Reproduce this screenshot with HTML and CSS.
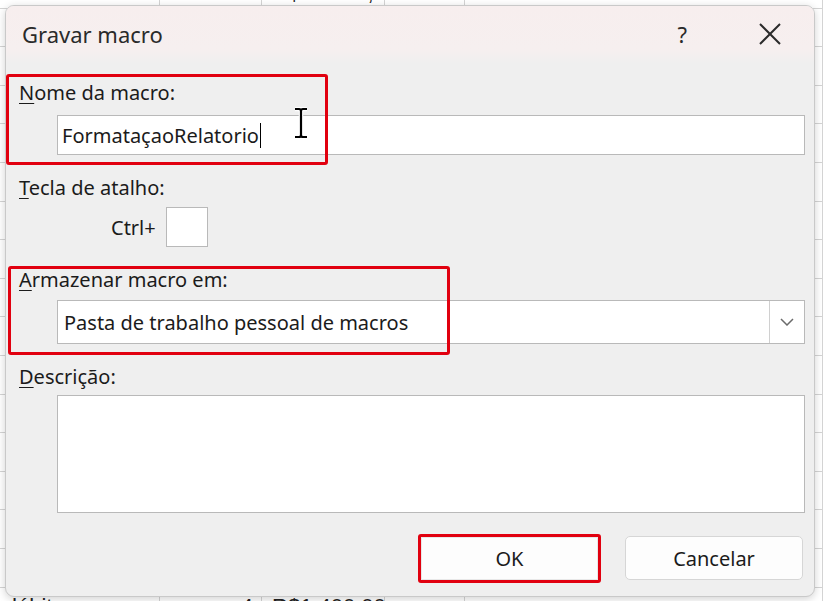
FILE: index.html
```html
<!DOCTYPE html>
<html lang="pt">
<head>
<meta charset="utf-8">
<title>Gravar macro</title>
<link rel="stylesheet" href="styles.css">
</head>
<body>
<div class="sheet">
  <div class="row first"><span class="c1">Cartão de crédito</span><span class="c2">1</span><span class="c3"><span>R$</span><span>16.239,00</span></span><span class="c4"></span><span class="c5"></span></div>
  <div class="row"><span class="c1"></span><span class="c2"></span><span class="c3"></span><span class="c4"></span><span class="c5"></span></div>
  <div class="row"><span class="c1"></span><span class="c2"></span><span class="c3"></span><span class="c4"></span><span class="c5"></span></div>
  <div class="row"><span class="c1"></span><span class="c2"></span><span class="c3"></span><span class="c4"></span><span class="c5"></span></div>
  <div class="row"><span class="c1"></span><span class="c2"></span><span class="c3"></span><span class="c4"></span><span class="c5"></span></div>
  <div class="row"><span class="c1"></span><span class="c2"></span><span class="c3"></span><span class="c4"></span><span class="c5"></span></div>
  <div class="row"><span class="c1"></span><span class="c2"></span><span class="c3"></span><span class="c4"></span><span class="c5"></span></div>
  <div class="row"><span class="c1"></span><span class="c2"></span><span class="c3"></span><span class="c4"></span><span class="c5"></span></div>
  <div class="row"><span class="c1"></span><span class="c2"></span><span class="c3"></span><span class="c4"></span><span class="c5"></span></div>
  <div class="row"><span class="c1"></span><span class="c2"></span><span class="c3"></span><span class="c4"></span><span class="c5"></span></div>
  <div class="row"><span class="c1"></span><span class="c2"></span><span class="c3"></span><span class="c4"></span><span class="c5"></span></div>
  <div class="row"><span class="c1"></span><span class="c2"></span><span class="c3"></span><span class="c4"></span><span class="c5"></span></div>
  <div class="row"><span class="c1"></span><span class="c2"></span><span class="c3"></span><span class="c4"></span><span class="c5"></span></div>
  <div class="row"><span class="c1"></span><span class="c2"></span><span class="c3"></span><span class="c4"></span><span class="c5"></span></div>
  <div class="row"><span class="c1"></span><span class="c2"></span><span class="c3"></span><span class="c4"></span><span class="c5"></span></div>
  <div class="row"><span class="c1"></span><span class="c2"></span><span class="c3"></span><span class="c4"></span><span class="c5"></span></div>
  <div class="row last"><span class="c1"><span class="shift">Cartão de débito</span></span><span class="c2">4</span><span class="c3"><span>R$</span><span>1.400,00</span></span><span class="c4"></span><span class="c5"></span></div>
</div>

<div class="dialog">
  <div class="titlebar">
    <span class="title">Gravar macro</span>
    <span class="help">?</span>
    <svg class="close" width="22" height="22" viewBox="0 0 22 22"><path d="M1 1 L21 21 M21 1 L1 21" stroke="#2b2b2b" stroke-width="2" fill="none"/></svg>
  </div>
  <div class="body">
    <div class="label"><u>N</u>ome da macro:</div>
    <div class="field name-field"><span class="value">FormataçaoRelatorio</span><span class="caret"></span></div>

    <div class="label gap"><u>T</u>ecla de atalho:</div>
    <div class="shortcut"><span class="ctrl">Ctrl+</span><span class="keybox"></span></div>

    <div class="label gap"><u>A</u>rmazenar macro em:</div>
    <div class="field select"><span class="value">Pasta de trabalho pessoal de macros</span><span class="drop"><svg width="14" height="8" viewBox="0 0 14 8"><path d="M1 1 L7 7 L13 1" stroke="#6b6b6b" stroke-width="1.5" fill="none"/></svg></span></div>

    <div class="label gap"><u>D</u>escrição:</div>
    <div class="field desc"></div>

    <div class="buttons">
      <button class="btn ok">OK</button>
      <button class="btn">Cancelar</button>
    </div>
  </div>
</div>

<div class="mark mark-name"></div>
<div class="mark mark-store"></div>
<svg class="ibeam" width="14" height="32" viewBox="0 0 14 32"><path d="M1 2 H5 Q7 2 7 4 V28 Q7 30 5 30 H1 M13 2 H9 Q7 2 7 4 M7 28 Q7 30 9 30 H13" stroke="#fff" stroke-width="4.5" fill="none"/><path d="M1 2 H5 Q7 2 7 4 V28 Q7 30 5 30 H1 M13 2 H9 Q7 2 7 4 M7 28 Q7 30 9 30 H13" stroke="#000" stroke-width="2.2" fill="none"/></svg>
</body>
</html>
```

FILE: styles.css
```css
* { box-sizing: border-box; }
html, body { margin: 0; padding: 0; }
body {
  width: 823px;
  height: 601px;
  overflow: hidden;
  position: relative;
  background: #ffffff;
  font-family: "Noto Sans", "Open Sans", sans-serif;
  color: #1b1b1b;
}

/* spreadsheet behind */
.sheet {
  display: flex;
  flex-direction: column;
  margin-top: -30px;
  font-family: "Liberation Sans", Arial, sans-serif;
  font-size: 22px;
  color: #222;
}
.row {
  display: flex;
  height: 38.6px;
  flex: none;
  border-bottom: 1px solid #d4d4d4;
}
.row > span {
  border-right: 1px solid #d4d4d4;
  display: flex;
  align-items: flex-end;
  padding-bottom: 2px;
  white-space: nowrap;
  overflow: hidden;
}
.c1 { width: 174px; margin-left: -14px; }
.c2 { width: 102px; justify-content: flex-end; padding-right: 8px; }
.c3 { width: 123px; justify-content: space-between; padding: 0 8px 2px 10px; }
.c4 { width: 80px; }
.c5 { flex: 1; }
.last > span { align-items: flex-start; padding-top: 6px; }
.shift { margin-left: -84px; }

/* dialog window */
.dialog {
  position: absolute;
  left: 5px;
  top: 5px;
  width: 810px;
  height: 592px;
  background: #efefef;
  border: 1px solid #c9c9c9;
  border-radius: 9px;
  box-shadow: 0 2px 8px rgba(0,0,0,0.18);
  overflow: hidden;
  display: flex;
  flex-direction: column;
}
.titlebar {
  height: 58px;
  flex: none;
  display: flex;
  align-items: center;
  padding: 0 0 2px 16px;
  background: linear-gradient(#f7eeee 0%, #f6efef 75%, #efefef 100%);
}
.title {
  font-size: 22px;
  color: #2a2a2a;
  flex: 1;
}
.help {
  font-size: 22px;
  color: #2a2a2a;
  margin-right: 72px;
}
.close { margin-right: 33px; }

.body {
  display: flex;
  flex-direction: column;
  padding: 16px 9px 0 13px;
}
.label {
  font-size: 20px;
  line-height: 26px;
  color: #1b1b1b;
}
.label u { text-decoration-thickness: 1px; text-underline-offset: 3px; }
.label.gap { margin-top: 20px; }

.field {
  margin-left: 38px;
  background: #fff;
  border: 1px solid #b9b9b9;
  display: flex;
  align-items: center;
  font-size: 20px;
  color: #1b1b1b;
}
.name-field {
  height: 40px;
  margin-top: 9px;
  padding-left: 4px;
}
.caret {
  width: 1.5px;
  height: 25px;
  background: #000;
  margin-left: 1px;
}
.shortcut {
  display: flex;
  align-items: center;
  margin-top: 6px;
  margin-left: 92px;
  gap: 10px;
}
.ctrl { font-size: 20px; }
.keybox {
  width: 42px;
  height: 40px;
  background: #fff;
  border: 1px solid #b9b9b9;
}
.select {
  height: 44px;
  margin-top: 7px;
  padding-left: 6px;
  justify-content: space-between;
}
.drop {
  width: 35px;
  height: 42px;
  border-left: 1px solid #d0d0d0;
  display: flex;
  align-items: center;
  justify-content: center;
  background: #fff;
}
.desc {
  height: 118px;
  margin-top: 5px;
}
.buttons {
  display: flex;
  justify-content: flex-end;
  gap: 24px;
  margin-top: 23px;
  padding-right: 2px;
}
.btn {
  width: 178px;
  height: 44px;
  background: #fdfdfd;
  border: 1px solid #d6d6d6;
  border-radius: 5px;
  font-family: "Noto Sans", "Open Sans", sans-serif;
  font-size: 20px;
  color: #1b1b1b;
}
.btn.ok {
  width: 183px;
  height: 49px;
  margin-top: -2px;
  border: 3px solid #e1000f;
  border-radius: 3px;
  box-shadow: inset 0 0 0 1px #e8e8e8;
}

/* red annotation boxes drawn over */
.mark {
  position: absolute;
  border: 3.5px solid #e1000f;
  border-radius: 3px;
}
.mark-name { left: 6px; top: 74px; width: 322px; height: 91px; }
.mark-store { left: 8px; top: 266px; width: 442px; height: 89px; }
.ibeam { position: absolute; left: 294px; top: 107px; }
```
